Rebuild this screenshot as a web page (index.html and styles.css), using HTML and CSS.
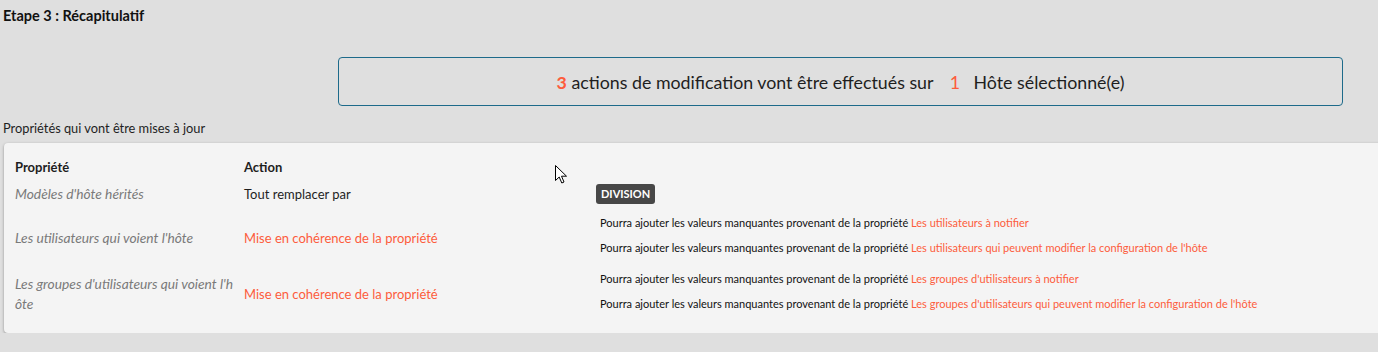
FILE: index.html
```html
<!DOCTYPE html>
<html lang="fr">
<head>
    <meta charset="UTF-8">
    <title>Récapitulatif</title>
    <link rel="stylesheet" href="styles.css">
</head>
<body>
    <div class="page">
        <h2 class="step-title">Etape 3 : Récapitulatif</h2>

        <!-- Summary banner -->
        <div class="summary">
            <span class="summary-text"><span class="count">3</span> actions de modification vont être effectués sur <span class="count-light">1</span> Hôte sélectionné(e)</span>
        </div>

        <p class="subtitle">Propriétés qui vont être mises à jour</p>

        <!-- Properties table -->
        <div class="card">
            <div class="grid">
                <div class="head">Propriété</div>
                <div class="head">Action</div>
                <div class="head"></div>

                <div class="prop">Modèles d'hôte hérités</div>
                <div class="action">Tout remplacer par</div>
                <div class="detail-badge"><span class="badge">DIVISION</span></div>

                <div class="prop">Les utilisateurs qui voient l'hôte</div>
                <div class="action orange">Mise en cohérence de la propriété</div>
                <div class="details">
                    <div class="line">Pourra ajouter les valeurs manquantes provenant de la propriété <span class="link">Les utilisateurs à notifier</span></div>
                    <div class="line">Pourra ajouter les valeurs manquantes provenant de la propriété <span class="link">Les utilisateurs qui peuvent modifier la configuration de l'hôte</span></div>
                </div>

                <div class="prop">Les groupes d'utilisateurs qui voient l'hôte</div>
                <div class="action orange">Mise en cohérence de la propriété</div>
                <div class="details">
                    <div class="line">Pourra ajouter les valeurs manquantes provenant de la propriété <span class="link">Les groupes d'utilisateurs à notifier</span></div>
                    <div class="line">Pourra ajouter les valeurs manquantes provenant de la propriété <span class="link">Les groupes d'utilisateurs qui peuvent modifier la configuration de l'hôte</span></div>
                </div>
            </div>
        </div>
    </div>

    <!-- mouse pointer -->
    <svg class="cursor" width="14" height="20" viewBox="0 0 14 20">
        <path d="M0.5 0.5 L0.5 15.5 L4.2 12 L6.8 18 L9 17 L6.5 11.2 L11.5 11.2 Z" fill="#fff" stroke="#000" stroke-width="1" stroke-linejoin="miter"/>
    </svg>
</body>
</html>
```

FILE: styles.css
```css
/* General */
body {
    margin: 0;
    padding: 0;
    background-color: #dfdfdf;
    font-family: Lato, "Open Sans", sans-serif;
    color: #1e1e1e;
    overflow: hidden;
}

.page {
    padding: 6px 0 0 3px;
}

/* Title */
.step-title {
    margin: 0;
    font-size: 14.5px;
    font-weight: bold;
    line-height: 20px;
    color: #111;
}

/* Summary banner */
.summary {
    margin: 31px 0 0 335px;
    width: 1003px;
    height: 47px;
    border: 1px solid #1d6a8a;
    border-radius: 4px;
    display: flex;
    justify-content: center;
    align-items: center;
    font-size: 17.8px;
    color: #1e1e1e;
}

.summary .count {
    color: #fd5c3c;
    font-weight: bold;
}

.summary .count-light {
    color: #fd5c3c;
    margin: 0 9px 0 12px;
}

.subtitle {
    margin: 13px 0 0 0;
    font-size: 12.8px;
    line-height: 18px;
}

/* Card */
.card {
    margin: 6px 0 0 1px;
    width: 1400px;
    background-color: #f4f4f4;
    border-radius: 4px;
    box-shadow: 0 1px 3px rgba(0, 0, 0, 0.35);
    padding: 13px 0 11px 11px;
    box-sizing: border-box;
}

.grid {
    display: grid;
    grid-template-columns: 224px 352px 1fr;
    column-gap: 5px;
    align-items: center;
}

.head {
    font-size: 13px;
    font-weight: bold;
    line-height: 22px;
}

.prop {
    font-size: 13.8px;
    font-style: italic;
    color: #7a7a7a;
    line-height: 20px;
    word-break: break-all;
}

.action {
    font-size: 13px;
    line-height: 20px;
    color: #1e1e1e;
}

.action.orange {
    color: #fd5c3c;
}

/* Detail column */
.detail-badge {
    height: 32px;
    display: flex;
    align-items: center;
    margin-left: -5px;
}

.badge {
    display: inline-block;
    background-color: #474747;
    color: #fff;
    font-size: 11px;
    font-weight: bold;
    line-height: 20px;
    padding: 0 5px;
    border-radius: 3px;
}

.details {
    padding-bottom: 6px;
    margin-left: -1px;
}

.line {
    font-size: 11px;
    line-height: 25px;
    color: #111;
}

.link {
    color: #fd5c3c;
}

/* Pointer overlay */
.cursor {
    position: absolute;
    left: 555px;
    top: 165px;
}
```
